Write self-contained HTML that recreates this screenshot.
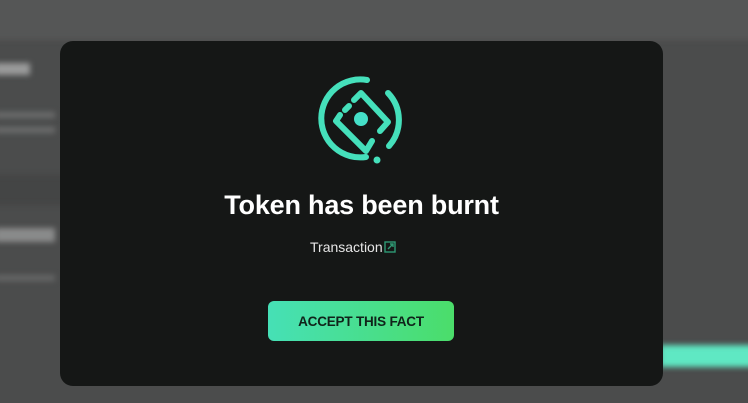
<!DOCTYPE html>
<html><head><meta charset="utf-8"><style>
html,body{margin:0;padding:0;width:748px;height:403px;overflow:hidden;background:#4b4c4c;font-family:"Liberation Sans",sans-serif;}
.bg{position:absolute;inset:0;}
.blur{position:absolute;filter:blur(3px);}
.modal{position:absolute;left:60px;top:41px;width:603px;height:345px;background:#151716;border-radius:13px;}
.title{position:absolute;left:0;width:603px;top:149px;text-align:center;color:#fff;font-weight:bold;font-size:27px;letter-spacing:-0.2px;}
.tx{position:absolute;left:250px;top:198px;color:#e6e6e6;font-size:14px;}
.btn{position:absolute;left:208px;top:260px;width:186px;height:40px;border-radius:6px;background:linear-gradient(90deg,#46e0b6,#4bdd6a);color:#10231a;font-weight:bold;font-size:13.5px;text-align:center;line-height:41px;letter-spacing:-0.2px;}
</style></head><body>
<div class="bg">
<div class="blur" style="left:-20px;top:-10px;width:800px;height:50px;background:#555656;"></div>
<div class="blur" style="left:-5px;top:63px;width:35px;height:12px;background:#9a9b9b;"></div>
<div class="blur" style="left:-5px;top:112px;width:60px;height:6px;background:#6c6d6d;"></div>
<div class="blur" style="left:-5px;top:127px;width:60px;height:6px;background:#6c6d6d;"></div>
<div class="blur" style="left:-10px;top:175px;width:80px;height:30px;background:#444545;"></div>
<div class="blur" style="left:-5px;top:228px;width:60px;height:14px;background:#8a8b8b;"></div>
<div class="blur" style="left:-5px;top:275px;width:60px;height:6px;background:#666767;"></div>
<div class="blur" style="left:660px;top:345px;width:100px;height:22px;background:#5fe8c3;"></div>
</div>
<div class="modal">
<svg width="748" height="403" style="position:absolute;left:-60px;top:-41px" viewBox="0 0 748 403">
<g fill="none" stroke="#45e0bb" stroke-width="6" stroke-linecap="round" stroke-linejoin="round">
<path d="M367 80 A39 39 0 1 0 366 157"/>
<path d="M388 93 A39 39 0 0 1 389 146"/>
<path d="M340 115 L336 121 L366 151 L372 141"/>
<path d="M354 100 L361 93 L388 122 L380 131"/>
<path d="M345 110 L349 106"/>
</g>
<circle cx="361" cy="119" r="7" fill="#45e0c8"/>
<circle cx="377" cy="160" r="3.5" fill="#45e0bb"/>
</svg>
<div class="title">Token has been burnt</div>
<div class="tx">Transaction<svg width="12" height="12" viewBox="0 0 12 12" style="vertical-align:-1px;margin-left:1px"><rect x="1" y="1" width="10" height="10" fill="none" stroke="#2f9a74" stroke-width="1.4"/><path d="M4 8 L9 3 M6 3 H9 V6" fill="none" stroke="#2f9a74" stroke-width="1.4"/></svg></div>
<div class="btn">ACCEPT THIS FACT</div>
</div>
</body></html>
